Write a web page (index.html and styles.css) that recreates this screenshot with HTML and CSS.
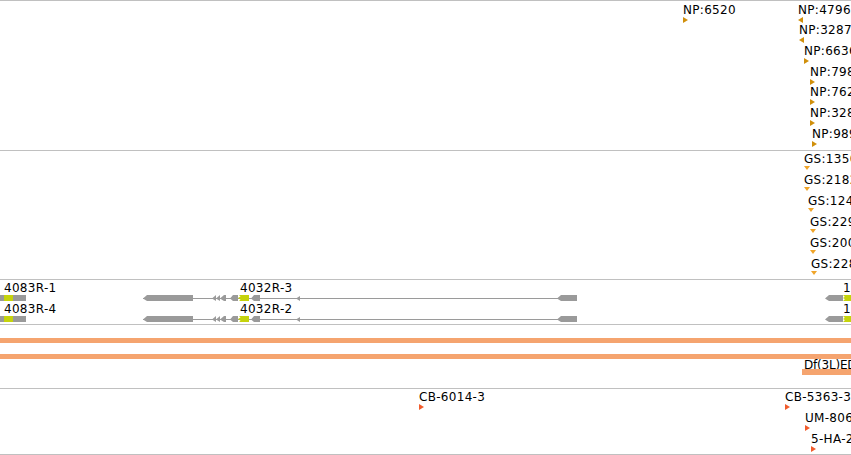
FILE: index.html
```html
<!DOCTYPE html>
<html>
<head>
<meta charset="utf-8">
<link rel="stylesheet" href="styles.css">
</head>
<body>
<div class="view">
  <div class="track t-np">
    <div class="feat np" style="left:683px;top:2px"><span class="lbl">NP:6520</span><i class="tri r"></i></div>
    <div class="feat np" style="left:798px;top:2px"><span class="lbl">NP:4796</span><i class="tri l"></i></div>
    <div class="feat np" style="left:799px;top:22px"><span class="lbl">NP:3287</span><i class="tri l"></i></div>
    <div class="feat np" style="left:804px;top:43px"><span class="lbl">NP:6636</span><i class="tri r"></i></div>
    <div class="feat np" style="left:810px;top:64px"><span class="lbl">NP:798</span><i class="tri r"></i></div>
    <div class="feat np" style="left:810px;top:84px"><span class="lbl">NP:762</span><i class="tri r"></i></div>
    <div class="feat np" style="left:810px;top:105px"><span class="lbl">NP:328</span><i class="tri r"></i></div>
    <div class="feat np" style="left:812px;top:126px"><span class="lbl">NP:989</span><i class="tri r"></i></div>
  </div>
  <div class="track t-gs">
    <div class="feat gs" style="left:804px;top:1px"><span class="lbl">GS:1350</span><i class="tri d"></i></div>
    <div class="feat gs" style="left:804px;top:22px"><span class="lbl">GS:2182</span><i class="tri d"></i></div>
    <div class="feat gs" style="left:808px;top:43px"><span class="lbl">GS:124</span><i class="tri d"></i></div>
    <div class="feat gs" style="left:810px;top:64px"><span class="lbl">GS:229</span><i class="tri d"></i></div>
    <div class="feat gs" style="left:810px;top:85px"><span class="lbl">GS:200</span><i class="tri d"></i></div>
    <div class="feat gs" style="left:811px;top:106px"><span class="lbl">GS:228</span><i class="tri d"></i></div>
  </div>
  <div class="track t-gene">
    <svg class="genes" width="851" height="44" viewBox="0 0 851 44">
      <defs>
        <g id="tx">
          <rect x="0" y="15" width="4" height="6" fill="#9a9a9a"/>
          <rect x="4" y="15" width="9" height="6" fill="#c5d30c"/>
          <rect x="13" y="15" width="13" height="6" fill="#9a9a9a"/>
          <rect x="143" y="18" width="434" height="1" fill="#9a9a9a"/>
          <polygon points="143,18.5 147,15 193,15 193,21 147,21" fill="#9a9a9a"/>
          <polygon points="212,18.5 216,15 216,21" fill="#9a9a9a"/>
          <polygon points="216,18.5 220,15 220,21" fill="#9a9a9a"/>
          <polygon points="220,18.5 224,15 226,15 226,21 224,21" fill="#9a9a9a"/>
          <polygon points="230,18.5 233,15 238,15 238,21 233,21" fill="#9a9a9a"/>
          <polygon points="239,15 249,15 249,21 239,21 242,18" fill="#c5d30c"/>
          <polygon points="238,18 242,15.5 242,20.5" fill="#c5d30c"/>
          <polygon points="251,18.5 254,15 260,15 260,21 254,21" fill="#9a9a9a"/>
          <polygon points="296,18.5 300,16 300,21" fill="#9a9a9a"/>
          <polygon points="557,18.5 561,15 577,15 577,21 561,21" fill="#9a9a9a"/>
          <polygon points="825,18.5 829,15 843,15 843,21 829,21" fill="#9a9a9a"/>
          <polygon points="843,15 851,15 851,21 843,21 846,18" fill="#c5d30c"/>
          <polygon points="843,18 847,15.5 847,20.5" fill="#c5d30c"/>
        </g>
      </defs>
      <use href="#tx"/>
      <use href="#tx" y="21"/>
    </svg>
    <span class="lbl glabel" style="left:4px;top:1px">4083R-1</span>
    <span class="lbl glabel" style="left:240px;top:1px">4032R-3</span>
    <span class="lbl glabel" style="left:843px;top:1px">1</span>
    <span class="lbl glabel" style="left:4px;top:22px">4083R-4</span>
    <span class="lbl glabel" style="left:240px;top:22px">4032R-2</span>
    <span class="lbl glabel" style="left:843px;top:22px">1</span>
  </div>
  <div class="track t-df">
    <div class="dfbar full"></div>
    <div class="dfbar full second"></div>
    <span class="lbl glabel tight" style="left:804px;top:33px">Df(3L)ED</span>
    <div class="dfbar short"></div>
  </div>
  <div class="track t-cb">
    <div class="feat cb" style="left:419px;top:1px"><span class="lbl">CB-6014-3</span><i class="tri r"></i></div>
    <div class="feat cb" style="left:785px;top:1px"><span class="lbl">CB-5363-3</span><i class="tri r"></i></div>
    <div class="feat cb" style="left:805px;top:22px"><span class="lbl">UM-806</span><i class="tri r"></i></div>
    <div class="feat cb" style="left:811px;top:43px"><span class="lbl">5-HA-2</span><i class="tri r"></i></div>
  </div>
</div>
</body>
</html>
```

FILE: styles.css
```css
html, body {
  margin: 0;
  padding: 0;
  background: #ffffff;
  overflow: hidden;
}
.view {
  width: 851px;
  height: 455px;
  overflow: hidden;
  display: flex;
  flex-direction: column;
  border-top: 1px solid #c0c0c0;
  font-family: "DejaVu Sans", "Verdana", sans-serif;
  font-size: 12px;
  color: #000;
}
.track {
  position: relative;
  flex: none;
  border-bottom: 1px solid #c0c0c0;
  overflow: hidden;
}
.t-np { height: 149px; }
.t-gs { height: 128px; }
.t-gene { height: 44px; }
.t-df { height: 63px; }
.t-cb { height: 65px; }

.feat {
  position: absolute;
  display: flex;
  flex-direction: column;
  align-items: flex-start;
}
.lbl {
  line-height: 14px;
  white-space: nowrap;
  letter-spacing: 0.3px;
}
.lbl.tight {
  letter-spacing: -0.2px;
}
.glabel {
  position: absolute;
}
.tri {
  display: block;
  width: 0;
  height: 0;
}
.tri.r {
  border-left: 5px solid currentColor;
  border-top: 3px solid transparent;
  border-bottom: 3px solid transparent;
}
.tri.l {
  border-right: 5px solid currentColor;
  border-top: 3px solid transparent;
  border-bottom: 3px solid transparent;
}
.tri.d {
  border-top: 4px solid currentColor;
  border-left: 3px solid transparent;
  border-right: 3px solid transparent;
}
.np .tri { color: #d08f0b; }
.gs .tri { color: #f0a52a; }
.cb .tri { color: #f15c2c; }

.genes {
  position: absolute;
  left: 0;
  top: 0;
  display: block;
}
.dfbar {
  position: absolute;
  background: #f5a46f;
  height: 5px;
}
.dfbar.full { left: 0; right: 0; top: 13px; }
.dfbar.second { top: 29px; }
.dfbar.short { left: 802px; right: 0; top: 44px; height: 6px; }
```
